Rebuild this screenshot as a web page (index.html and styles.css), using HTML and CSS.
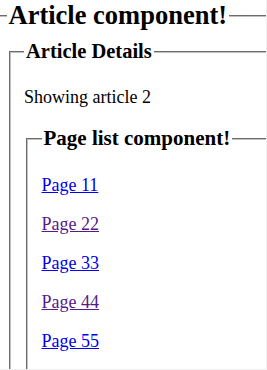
FILE: index.html
```html
<!DOCTYPE html>
<html lang="en">
  <head>
    <meta charset="UTF-8">
    <meta name="viewport" content="width=device-width, initial-scale=1.0">
    <title>Article component</title>
    <link rel="stylesheet" href="styles.css">
  </head>
  <body>
    <fieldset class="article">
      <legend class="title">Article component!</legend>
      <fieldset class="details">
        <legend class="subtitle">Article Details</legend>
        <p>Showing article 2</p>
        <fieldset class="pages">
          <legend class="list-title">Page list component!</legend>
          <p><a href="#page11">Page 11</a></p>
          <p><a href="#page22" class="visited">Page 22</a></p>
          <p><a href="#page33">Page 33</a></p>
          <p><a href="#page44" class="visited">Page 44</a></p>
          <p><a href="#page55">Page 55</a></p>
        </fieldset>
      </fieldset>
    </fieldset>
  </body>
</html>
```

FILE: styles.css
```css
html {
  background-color: #f0f0f0;
}
body {
  margin: 0 1px 1px 0;
  height: 369px;
  overflow: hidden;
  background-color: #fff;
  font-family: "Liberation Serif", "Times New Roman", serif;
  font-size: 18px;
}
fieldset {
  margin: 0 2px;
  padding: 6px 13.5px 11px;
  border: 2px groove #c0c0c0;
}
.article {
  margin-left: -9px;
  margin-right: -20px;
  padding-top: 9px;
}
.details {
  margin-right: -20px;
}
.pages {
  margin-right: -20px;
}
legend {
  padding: 0 2px;
  font-weight: bold;
}
.title {
  font-size: 26.5px;
}
.subtitle {
  font-size: 20.5px;
}
.list-title {
  font-size: 21px;
}
a {
  color: #0000ee;
}
a.visited {
  color: #551a8b;
}
```
